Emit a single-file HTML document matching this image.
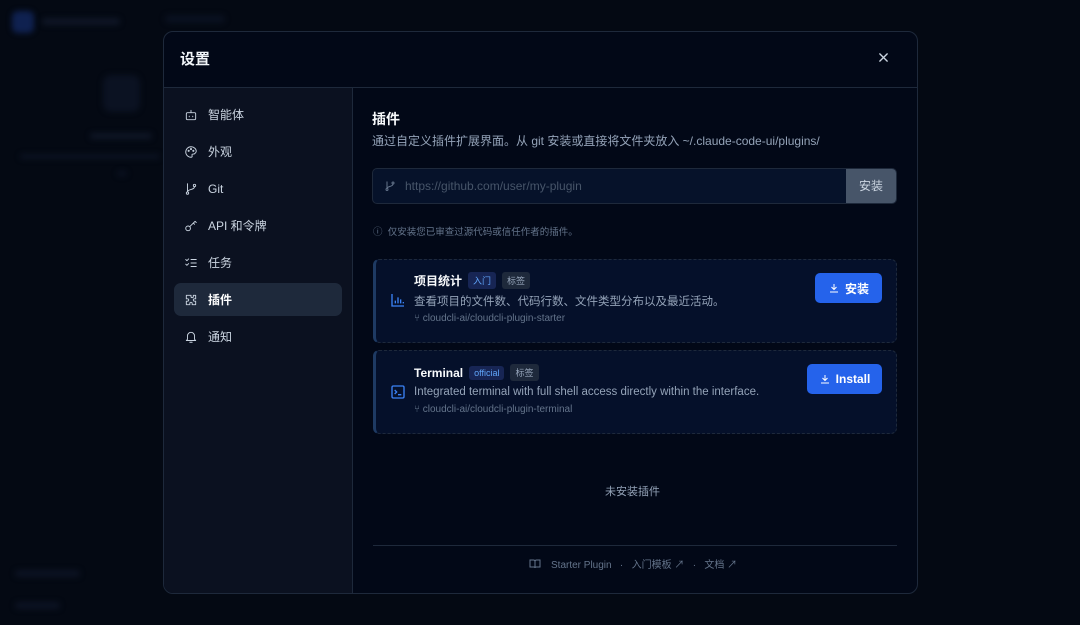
<!DOCTYPE html>
<html><head><meta charset="utf-8"><style>
*{box-sizing:border-box;margin:0;padding:0}
body{width:1080px;height:625px;overflow:hidden;background:#040913;font-family:"Liberation Sans","Noto Sans CJK SC",sans-serif;position:relative;color:#e2e8f0}
.bl{position:absolute;filter:blur(3px);background:#0f1626;border-radius:4px}
.modal{position:absolute;left:163px;top:31px;width:755px;height:563px;border:1px solid #1e293b;border-radius:10px;background:#020817;overflow:hidden}
.hdr{height:56px;border-bottom:1px solid #1e293b;display:flex;align-items:center;padding-left:16px;font-size:15px;font-weight:bold;color:#f1f5f9;padding-bottom:2px}
.close{position:absolute;right:28px;top:20px}
.side{position:absolute;left:0;top:56px;width:189px;bottom:0;background:#0b1120;border-right:1px solid #1e293b}
.it{position:absolute;left:10px;width:168px;height:33px;border-radius:7px;display:flex;align-items:center;padding-left:10px;font-size:12px;color:#cbd5e1}
.it svg{width:14px;height:14px;margin-right:10px;stroke:#cbd5e1;fill:none;stroke-width:1.6;stroke-linecap:round;stroke-linejoin:round}
.act{background:#1e293b;color:#fff;font-weight:bold}
.card{position:absolute;left:209px;width:524px;border:1px dashed #1e293b;border-left:3px solid #1e3a63;border-radius:6px;background:#05102a}
.tag{display:inline-block;font-size:9px;padding:2px 5px;border-radius:3px;margin-left:6px;vertical-align:1px;font-weight:normal}
.btn{position:absolute;background:#2563eb;color:#fff;font-size:12px;font-weight:bold;border-radius:5px;display:flex;align-items:center;justify-content:center;gap:5px}
.btn svg{width:12px;height:12px;stroke:#fff;fill:none;stroke-width:2}
.sm{font-size:10px;color:#64748b}
</style></head><body>
<div class="bl" style="left:12px;top:11px;width:22px;height:22px;background:#0f2150;border-radius:6px"></div>
<div class="bl" style="left:42px;top:18px;width:78px;height:7px"></div>
<div class="bl" style="left:165px;top:15px;width:60px;height:8px;background:#0a1120"></div>
<div class="bl" style="left:103px;top:75px;width:37px;height:37px;background:#0b1222;border-radius:8px"></div>
<div class="bl" style="left:90px;top:133px;width:62px;height:6px"></div>
<div class="bl" style="left:20px;top:154px;width:140px;height:5px;background:#0b1222"></div>
<div class="bl" style="left:117px;top:171px;width:10px;height:5px;background:#0b1222"></div>
<div class="bl" style="left:15px;top:570px;width:65px;height:7px;background:#0c1323"></div>
<div class="bl" style="left:15px;top:602px;width:45px;height:7px;background:#0c1323"></div>

<div class="modal">
<div class="hdr">设置</div>
<svg class="close" width="11" height="11" viewBox="0 0 12 12" stroke="#cbd5e1" stroke-width="1.5" stroke-linecap="round"><path d="M2 2l8 8M10 2l-8 8"/></svg>
<div class="side">
<div class="it" style="top:10px"><svg viewBox="0 0 24 24"><rect x="4" y="8" width="16" height="12" rx="2"/><path d="M12 8V4M9 14v1M15 14v1"/></svg>智能体</div>
<div class="it" style="top:47px"><svg viewBox="0 0 24 24"><path d="M12 3a9 9 0 100 18c1.5 0 2-1 2-2s-1-2 0-3 3 0 4-1 3-2 3-4c0-4.5-4-8-9-8z"/><circle cx="8" cy="10" r="1"/><circle cx="12" cy="7" r="1"/><circle cx="16" cy="10" r="1"/></svg>外观</div>
<div class="it" style="top:84px"><svg viewBox="0 0 24 24"><circle cx="6" cy="19" r="2"/><circle cx="18" cy="6" r="2"/><path d="M6 3v14M18 8c0 6-12 4-12 9"/></svg>Git</div>
<div class="it" style="top:121px"><svg viewBox="0 0 24 24"><circle cx="7" cy="16" r="4"/><path d="M10 13l9-9M16 7l2 2M19 4l2 2"/></svg>API 和令牌</div>
<div class="it" style="top:158px"><svg viewBox="0 0 24 24"><path d="M3 6l2 2 3-3M3 14l2 2 3-3M12 6h9M12 12h9M12 18h9"/></svg>任务</div>
<div class="it act" style="top:195px"><svg viewBox="0 0 24 24"><path d="M8 4h4v2a2 2 0 004 0V4h4v6h-2a2 2 0 000 4h2v6h-6v-2a2 2 0 00-4 0v2H4v-6h2a2 2 0 000-4H4V4z"/></svg>插件</div>
<div class="it" style="top:232px"><svg viewBox="0 0 24 24"><path d="M6 16V10a6 6 0 0112 0v6l2 2H4zM10 21h4"/></svg>通知</div>
</div>

<div style="position:absolute;left:208px;top:77px;font-size:14px;font-weight:bold;color:#f8fafc">插件</div>
<div style="position:absolute;left:208px;top:100px;font-size:12px;color:#94a3b8">通过自定义插件扩展界面。从 git 安装或直接将文件夹放入 ~/.claude-code-ui/plugins/</div>
<div style="position:absolute;left:208px;top:136px;width:525px;height:36px;border:1px solid #1e293b;border-radius:5px;background:#06122a;overflow:hidden">
<svg style="position:absolute;left:11px;top:11px" width="12" height="12" viewBox="0 0 24 24" fill="none" stroke="#64748b" stroke-width="2"><circle cx="6" cy="19" r="2"/><circle cx="18" cy="6" r="2"/><path d="M6 3v14M18 8c0 6-12 4-12 9"/></svg>
<span style="position:absolute;left:32px;top:10px;font-size:12px;color:#475569">https://github.com/user/my-plugin</span>
<div style="position:absolute;right:0;top:0;width:50px;height:34px;background:#475569;color:#cbd5e1;font-size:12px;line-height:34px;text-align:center">安装</div>
</div>
<div class="sm" style="position:absolute;left:209px;top:192px;font-size:9.5px">ⓘ&nbsp; 仅安装您已审查过源代码或信任作者的插件。</div>

<div class="card" style="top:227px;height:84px">
<svg style="position:absolute;left:14px;top:32px" width="16" height="16" viewBox="0 0 24 24" fill="none" stroke="#3b82f6" stroke-width="2"><path d="M3 3v18h18M8 17v-4M12 17V8M16 17v-6M20 17v-2"/></svg>
<div style="position:absolute;left:38px;top:12px;font-size:12px;font-weight:bold;color:#f8fafc">项目统计<span class="tag" style="background:#172554;color:#60a5fa">入门</span><span class="tag" style="background:#1e293b;color:#94a3b8">标签</span></div>
<div style="position:absolute;left:38px;top:33px;font-size:11.5px;color:#94a3b8">查看项目的文件数、代码行数、文件类型分布以及最近活动。</div>
<div class="sm" style="position:absolute;left:38px;top:53px">⑂ cloudcli-ai/cloudcli-plugin-starter</div>
<div class="btn" style="left:439px;top:13px;width:67px;height:30px"><svg viewBox="0 0 24 24"><path d="M12 4v11M7 10l5 5 5-5M4 20h16"/></svg>安装</div>
</div>
<div class="card" style="top:318px;height:84px">
<svg style="position:absolute;left:14px;top:33px" width="16" height="16" viewBox="0 0 24 24" fill="none" stroke="#3b82f6" stroke-width="2"><rect x="3" y="3" width="18" height="18" rx="2"/><path d="M7 9l3 3-3 3M12 16h5"/></svg>
<div style="position:absolute;left:38px;top:13px;font-size:12px;font-weight:bold;color:#f8fafc">Terminal<span class="tag" style="background:#172554;color:#60a5fa">official</span><span class="tag" style="background:#1e293b;color:#94a3b8">标签</span></div>
<div style="position:absolute;left:38px;top:35px;font-size:11.5px;color:#94a3b8">Integrated terminal with full shell access directly within the interface.</div>
<div class="sm" style="position:absolute;left:38px;top:53px">⑂ cloudcli-ai/cloudcli-plugin-terminal</div>
<div class="btn" style="left:431px;top:13px;width:75px;height:30px"><svg viewBox="0 0 24 24"><path d="M12 4v11M7 10l5 5 5-5M4 20h16"/></svg>Install</div>
</div>

<div style="position:absolute;left:441px;top:451px;font-size:11px;color:#94a3b8">未安装插件</div>
<div style="position:absolute;left:209px;top:513px;width:524px;border-top:1px solid #1e293b"></div>
<div class="sm" style="position:absolute;left:365px;top:524px;width:230px;color:#64748b;display:flex;align-items:center;gap:0"><svg width="12" height="12" viewBox="0 0 24 24" fill="none" stroke="#64748b" stroke-width="2" style="margin-right:10px"><path d="M2 4h7a3 3 0 013 3v13a2 2 0 00-2-2H2zM22 4h-7a3 3 0 00-3 3v13a2 2 0 012-2h8z"/></svg>Starter Plugin &nbsp;&nbsp;·&nbsp;&nbsp; 入门模板 ↗ &nbsp;&nbsp;·&nbsp;&nbsp; 文档 ↗</div>
</div>
</body></html>
